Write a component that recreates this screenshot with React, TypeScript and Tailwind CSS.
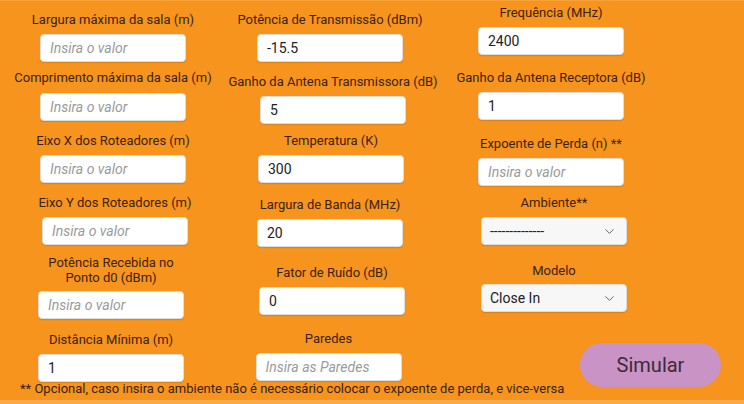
import { ChevronDown } from 'lucide-react'

interface FieldProps {
  label: React.ReactNode
  value?: string
  placeholder?: string
  wrap: string      // margin + horizontal nudge for the whole field
  gap?: string      // space between label and box
  labelClass?: string
}

function Field({ label, value, placeholder, wrap, gap = 'mt-[6px]', labelClass = 'leading-[16px]' }: FieldProps) {
  return (
    <div className={`flex flex-col items-center shrink-0 ${wrap}`}>
      <p className={`text-[13px] text-center text-[#3a2212] whitespace-nowrap ${labelClass}`}>{label}</p>
      <input
        readOnly
        defaultValue={value}
        placeholder={placeholder}
        className={`${gap} w-[146px] h-[28px] rounded-[4px] bg-white border border-[#e2ddd8] shadow-[0_1px_1px_rgba(0,0,0,0.12)] px-[9px] text-[14px] text-[#222] outline-none placeholder:italic placeholder:text-[#9a9a9a]`}
      />
    </div>
  )
}

function SelectBox({ label, value, wrap, gap = 'mt-[6px]' }: { label: string; value: string; wrap: string; gap?: string }) {
  return (
    <div className={`flex flex-col items-center shrink-0 ${wrap}`}>
      <p className="text-[13px] leading-[16px] text-center text-[#3a2212] whitespace-nowrap">{label}</p>
      <div className={`${gap} w-[146px] h-[28px] rounded-[4px] bg-[#f7f7f8] border border-[#e0dcd8] shadow-[0_1px_1px_rgba(0,0,0,0.12)] flex items-center justify-between pl-[8px] pr-[9px]`}>
        <span className="text-[14px] text-[#222]">{value}</span>
        <ChevronDown size={15} strokeWidth={1.6} className="text-[#666]" />
      </div>
    </div>
  )
}

export default function App() {
  return (
    <div
      className="w-[744px] h-[404px] bg-[#f7941d] flex flex-col overflow-hidden"
      style={{ fontFamily: 'Roboto, "Liberation Sans", Arial, sans-serif' }}
    >
      <div className="h-[1px] shrink-0 bg-[#f9a23a]" />
      <div className="flex h-[380px] shrink-0">
        {/* Column 1 */}
        <div className="w-[226px] flex flex-col">
          <Field wrap="mt-[11px]" label="Largura máxima da sala (m)" placeholder="Insira o valor" />
          <Field wrap="mt-[8px]" gap="mt-[7px]" label="Comprimento máxima da sala (m)" placeholder="Insira o valor" />
          <Field wrap="mt-[12px]" label="Eixo X dos Roteadores (m)" placeholder="Insira o valor" />
          <Field wrap="mt-[12px] ml-[4px]" label="Eixo Y dos Roteadores (m)" placeholder="Insira o valor" />
          <Field
            wrap="mt-[10px] -ml-[4px]"
            labelClass="leading-[15px]"
            label={<>Potência Recebida no<br />Ponto d0 (dBm)</>}
            placeholder="Insira o valor"
          />
          <Field wrap="mt-[13px] -ml-[4px]" label="Distância Mínima (m)" value="1" />
        </div>

        {/* Column 2 */}
        <div className="w-[208px] flex flex-col">
          <Field wrap="mt-[11px]" label="Potência de Transmissão (dBm)" value="-15.5" />
          <Field wrap="mt-[12px] ml-[6px]" label="Ganho da Antena Transmissora (dB)" value="5" />
          <Field wrap="mt-[9px] ml-[2px]" label="Temperatura (K)" value="300" />
          <Field wrap="mt-[14px]" label="Largura de Banda (MHz)" value="20" />
          <Field wrap="mt-[18px] ml-[4px]" label="Fator de Ruído (dB)" value="0" />
          <Field wrap="mt-[16px] -ml-[3px]" label="Paredes" placeholder="Insira as Paredes" />
        </div>

        {/* Column 3 + button */}
        <div className="flex-1 flex flex-col">
          <div className="w-[234px] flex flex-col shrink-0">
            <Field wrap="mt-[4px]" label="Frequência (MHz)" value="2400" />
            <Field wrap="mt-[15px]" label="Ganho da Antena Receptora (dB)" value="1" />
            <Field wrap="mt-[16px]" label="Expoente de Perda (n) **" placeholder="Insira o valor" />
            <SelectBox wrap="mt-[9px] ml-[6px]" label="Ambiente**" value="--------------" />
            <SelectBox wrap="mt-[18px] ml-[6px]" gap="mt-[5px]" label="Modelo" value="Close In" />
          </div>
          <button className="shrink-0 self-end mr-[23px] mt-[31px] w-[141px] h-[44px] rounded-full bg-[#c993c5] text-[20px] text-[#3b2a3b]">
            Simular
          </button>
        </div>
      </div>

      <p className="pl-[20px] text-[13px] leading-[15px] text-[#3a2212] whitespace-nowrap">
        ** Opcional, caso insira o ambiente não é necessário colocar o expoente de perda, e vice-versa
      </p>
      <div className="mt-auto h-[4px] shrink-0 bg-[#f9aa48]" />
    </div>
  )
}
